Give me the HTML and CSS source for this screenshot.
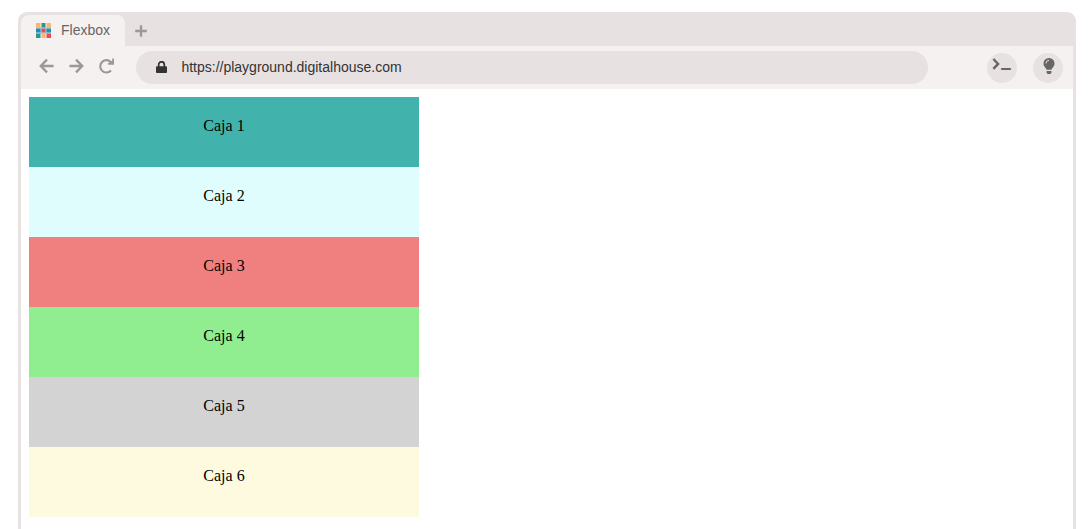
FILE: index.html
```html
<!DOCTYPE html>
<html lang="es">
<head>
<meta charset="utf-8">
<title>Flexbox</title>
<link rel="stylesheet" href="styles.css">
</head>
<body>
<div class="browser">
  <div class="tabs">
    <div class="tab">
      <svg class="favicon" width="15" height="15" viewBox="0 0 15 15">
        <rect y="4" width="15" height="7" fill="#a9d3e0"/>
        <rect width="4.5" height="4.4" fill="#fdb46c"/><rect x="5.5" width="4" height="4.4" fill="#2f948c"/><rect x="10.5" width="4.5" height="4.4" fill="#fdb46c"/>
        <rect y="5.6" width="4.5" height="3.8" fill="#1f8fb8"/><rect x="5.5" y="5.6" width="4" height="3.8" fill="#ec4a50"/><rect x="10.5" y="5.6" width="4.5" height="3.8" fill="#1f8fb8"/>
        <rect y="10.6" width="4.5" height="4.4" fill="#2f948c"/><rect x="5.5" y="10.6" width="4" height="4.4" fill="#fdb46c"/><rect x="10.5" y="10.6" width="4.5" height="4.4" fill="#ec4a50"/>
      </svg>
      <span class="tab-title">Flexbox</span>
    </div>
    <svg class="new-tab" width="12" height="12" viewBox="0 0 12 12"><path d="M6 .2v11.6M.2 6h11.6" fill="none" stroke="#999" stroke-width="2.3"/></svg>
  </div>
  <div class="toolbar">
    <div class="nav">
      <svg width="15" height="16" viewBox="0 0 15 16"><path d="M8 1.7 1.8 8 8 14.3M2 8h12.6" fill="none" stroke="#999" stroke-width="2.4"/></svg>
      <svg width="15" height="16" viewBox="0 0 15 16"><path d="M7 1.7 13.2 8 7 14.3M13 8H.4" fill="none" stroke="#999" stroke-width="2.4"/></svg>
      <svg width="15" height="16" viewBox="0 0 15 16"><path d="M12.4 4.6A6.2 6.2 0 1 0 12 12.5" fill="none" stroke="#999" stroke-width="2.1"/><path d="M15 .6v6.2H8.9V5.2L13.2 2.8V.6z" fill="#999"/></svg>
    </div>
    <div class="address">
      <svg width="11" height="12" viewBox="0 0 11 12"><path d="M2.7 6V3.6a2.8 2.8 0 0 1 5.6 0V6" fill="none" stroke="#333" stroke-width="1.7"/><rect y="5.2" width="11" height="6.8" rx="1" fill="#333"/></svg>
      <span>https://playground.digitalhouse.com</span>
    </div>
    <div class="actions">
      <div class="round">
        <svg width="20" height="18" viewBox="0 0 20 18"><path d="m1.4 2 4.7 4.9-4.7 4.9" fill="none" stroke="#666" stroke-width="2.4"/><path d="M9.9 12h8.2" stroke="#666" stroke-width="2.1" stroke-linecap="round"/></svg>
      </div>
      <div class="round bulb">
        <svg width="12" height="16" viewBox="0 0 12 16"><path d="M6 0a5.5 5.5 0 0 0-5.5 5.5c0 1.7.7 2.7 1.5 3.7.8 1 1.3 1.7 1.5 2.6h5c.2-.9.7-1.6 1.5-2.6s1.5-2 1.5-3.7A5.5 5.5 0 0 0 6 0z" fill="#666"/><path d="M3.6 13h4.8v1.6L7.5 16h-3l-.9-1.4z" fill="#666"/><path d="M2.9 5.5A3.1 3.1 0 0 1 6 2.4" fill="none" stroke="#e7e2e2" stroke-width="1"/></svg>
      </div>
    </div>
  </div>
  <div class="page">
    <div class="box teal">Caja 1</div>
    <div class="box cyan">Caja 2</div>
    <div class="box coral">Caja 3</div>
    <div class="box green">Caja 4</div>
    <div class="box gray">Caja 5</div>
    <div class="box cream">Caja 6</div>
  </div>
</div>
</body>
</html>
```
FILE: styles.css
```css
* { box-sizing: border-box; }
html, body { height: 100%; }
body {
  margin: 0;
  padding: 12px 13px 0 18px;
  background: #fff;
  font-family: "Liberation Sans", Arial, sans-serif;
  overflow: hidden;
}
svg { display: block; flex: none; }
.browser {
  height: 100%;
  border: 3px solid #e7e1e1;
  border-bottom: 0;
  border-radius: 9px 9px 0 0;
  background: #e7e1e1;
}
.tabs { display: flex; align-items: center; height: 31px; gap: 10px; }
.tab {
  display: flex;
  align-items: center;
  gap: 10px;
  width: 104px;
  height: 31px;
  padding-left: 15px;
  background: #f5f1f1;
  border-radius: 8px 8px 0 0;
}
.tab-title { padding-bottom: 2px; font-size: 14px; line-height: 16px; color: #666; }
.toolbar {
  display: flex;
  align-items: center;
  height: 43px;
  padding: 0 10px 0 17.5px;
  background: #f5f1f1;
}
.nav { display: flex; gap: 15px; width: 97.5px; padding-bottom: 4px; }
.address {
  display: flex;
  align-items: center;
  gap: 14.4px;
  width: 792px;
  height: 33px;
  padding: 0 0 2px 20px;
  border-radius: 17px;
  background: #e7e1e1;
  color: #333;
  font-size: 14px;
  line-height: 16px;
}
.actions { display: flex; gap: 16px; margin-left: auto; }
.round {
  display: flex;
  justify-content: center;
  align-items: center;
  width: 30px;
  height: 30px;
  border-radius: 50%;
  background: #e7e1e1;
}
.round svg { margin-bottom: 4px; }
.bulb { padding-left: 1px; }
.page {
  height: calc(100% - 74px);
  padding: 8px;
  background: #fff;
}
.box {
  width: 390px;
  height: 70px;
  padding: 20px;
  text-align: center;
  font: 16px/18px "Liberation Serif", "Times New Roman", serif;
  color: #000;
}
.teal { background: #42b3ac; }
.cyan { background: #dffdfd; }
.coral { background: #f08080; }
.green { background: #90ee90; }
.gray { background: #d3d3d3; }
.cream { background: #fefae0; }
```
